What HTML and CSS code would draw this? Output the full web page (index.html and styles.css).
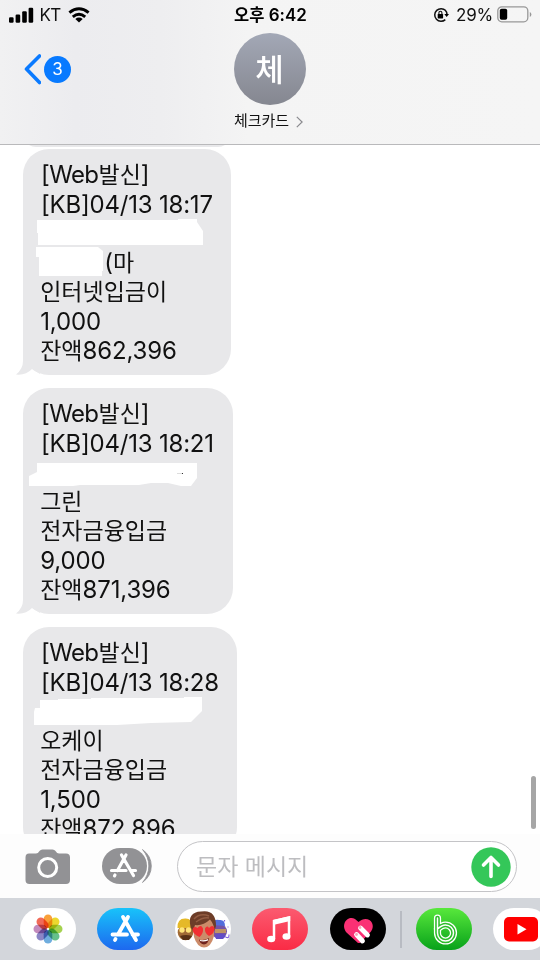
FILE: index.html
```html
<!DOCTYPE html>
<html lang="ko">
<head>
<meta charset="utf-8">
<title>체크카드</title>
<link rel="stylesheet" href="styles.css">
</head>
<body>
<div class="phone">
  <header class="header">
    <div class="status">
      <div class="status-left">
        <svg width="25" height="16" viewBox="0 0 25 16"><rect x="0" y="10.2" width="4.6" height="5.6" rx="1.2"/><rect x="6.6" y="7.6" width="4.6" height="8.2" rx="1.2"/><rect x="13.2" y="4.2" width="4.6" height="11.6" rx="1.2"/><rect x="19.6" y="0.8" width="4.6" height="15" rx="1.2"/></svg>
        <span class="carrier">KT</span>
        <svg class="wifi" width="22" height="16" viewBox="0 0 22 16"><path d="M1.4 5.6Q11-2 20.600 5.600M4.800 9.800Q11 4.800 17.200 9.800" fill="none" stroke="#000" stroke-width="3"/><path d="M7.3 12Q11 9.200 14.7 12L11 15.6Z"/></svg>
      </div>
      <div class="clock"><span class="ko">오후</span> 6:42</div>
      <div class="status-right">
        <svg width="16" height="16" viewBox="0 0 16 16"><path d="M12.600 3.600A6.300 6.300 0 1 0 12.300 12.600M12.300 3.300Q14 5 14 7.500" fill="none" stroke="#111" stroke-width="1.500"/><path d="M11.300 7.100h4.700l-2.300 3Z"/><rect x="4.700" y="7" width="5.400" height="4.400" rx=".6"/><path d="M5.900 7V5.800a1.5 1.5 0 0 1 3 0V7" fill="none" stroke="#111" stroke-width="1.1"/></svg>
        <span class="percent">29%</span>
        <svg width="35" height="17" viewBox="0 0 35 17"><rect x=".8" y=".8" width="30" height="15" rx="4" fill="none" stroke="#989898" stroke-width="1.3"/><rect x="2.8" y="2.8" width="7.4" height="11" rx="1.8"/><path d="M32.8 6v5q1.6-.8 1.6-2.5T32.800 6" fill="#989898"/></svg>
      </div>
    </div>
    <div class="nav">
      <div class="back">
        <svg width="18" height="32" viewBox="0 0 18 32"><path d="M16.500 3L3.500 16 16.500 29.500" fill="none" stroke="#0a7aff" stroke-width="3.600" stroke-linecap="round" stroke-linejoin="round"/></svg>
        <span class="count">3</span>
      </div>
      <div class="contact">
        <div class="avatar">체</div>
        <div class="name"><span>체크카드</span><svg width="7" height="12" viewBox="0 0 7 12"><path d="M.8.900L6.100 6 .8 11.100" fill="none" stroke="#8a8a8e" stroke-width="1.200"/></svg></div>
      </div>
    </div>
  </header>

  <main class="thread">
    <div class="bubble bubble-prev"></div>
    <div class="bubble b1">
      <p><span class="en w">[Web</span>발신<span class="en">]</span></p>
      <p><span class="en d">[KB]04/13 18:17</span></p>
      <p></p>
      <p class="payer"><span class="en">(</span>마</p>
      <p>인터넷입금이</p>
      <p><span class="en n">1,000</span></p>
      <p>잔액<span class="en n">862,396</span></p>
      <svg class="mask" width="240" height="226"><path fill="#fff" d="M14 71H155V70H174V73L180 82V96H15V84H14ZM13 98H75L80 102V122H79V127H16V108H13Z"/></svg>
      <svg class="tail" width="24" height="26" viewBox="0 0 24 26"><path d="M7 0V12Q7 20 0 25.500Q10 26.500 16 20L24 25V0Z"/></svg>
    </div>
    <div class="bubble b2">
      <p><span class="en w">[Web</span>발신<span class="en">]</span></p>
      <p><span class="en d">[KB]04/13 18:21</span></p>
      <p></p>
      <p>그린</p>
      <p>전자금융입금</p>
      <p><span class="en n">9,000</span></p>
      <p>잔액<span class="en n">871,396</span></p>
      <svg class="mask" width="240" height="226"><path fill="#fff" d="M14 75H174V90L168 98H158L145 95H128L116 97H57L50 98H6V88L14 84Z"/><path d="M154 85.500h5" stroke="#ddd"/><path d="M159 85.500h1" stroke="#333"/></svg>
      <svg class="tail" width="24" height="26" viewBox="0 0 24 26"><path d="M7 0V12Q7 20 0 25.500Q10 26.500 16 20L24 25V0Z"/></svg>
    </div>
    <div class="bubble b3">
      <p><span class="en w">[Web</span>발신<span class="en">]</span></p>
      <p><span class="en d">[KB]04/13 18:28</span></p>
      <p></p>
      <p>오케이</p>
      <p>전자금융입금</p>
      <p><span class="en n">1,500</span></p>
      <p>잔액<span class="en n">872,896</span></p>
      <svg class="mask" width="240" height="226"><path fill="#fff" d="M17 73H35V72H68V71H161V70H179V84L168 95L128 96L94 98H11V85L12 81H17Z"/></svg>
    </div>
    <div class="scrollbar"></div>
  </main>

  <div class="composer">
    <svg class="camera" width="46" height="36" viewBox="0 0 46 36"><path fill="#929295" d="M4 4.500H11Q13 4.500 14.500 2Q15.500.5 17.500.5H27.500Q29.500.5 30.500 2Q32 4.500 34 4.500H41Q45 4.500 45 8.500V31Q45 35 41 35H4.500Q.5 35 .5 31V8.500Q.5 4.500 4 4.500Z"/><circle cx="22.700" cy="18.500" r="9" fill="none" stroke="#fff" stroke-width="3"/></svg>
    <svg class="apps" width="52" height="38" viewBox="0 0 52 38"><rect x="0" y="1" width="45" height="36" rx="18" fill="#929295"/><path d="M40.500 2.500Q49.300 9 49.300 19T40.500 35.500Q46.800 28 46.800 19T40.500 2.500Z" fill="#929295" stroke="#929295" stroke-width=".8"/><g fill="none" stroke="#fff" stroke-width="3.200" stroke-linecap="round"><path d="M19.500 8L31.500 28.500M24 8L15.500 23.500M9.500 23.500H24M29 23.500H33.500M13 28L12.500 28.800"/></g></svg>
    <div class="field"><span>문자 메시지</span>
      <svg width="40" height="40" viewBox="0 0 40 40"><circle cx="20" cy="20" r="19.700" fill="#34c759"/><path d="M20 29.500V11M12.500 18L20 10.500 27.500 18" fill="none" stroke="#fff" stroke-width="3.600" stroke-linecap="round" stroke-linejoin="round"/></svg>
    </div>
  </div>

  <footer class="drawer">
    <div class="pill white"><svg viewBox="0 0 56 42"><g class="petals"><rect x="23.700" y="6.500" width="8.600" height="13.500" rx="4.300" fill="#f9a03a"/><rect x="23.700" y="6.500" width="8.600" height="13.500" rx="4.300" fill="#ecd82f" transform="rotate(45 28 21)"/><rect x="23.700" y="6.500" width="8.600" height="13.500" rx="4.300" fill="#a5d24f" transform="rotate(90 28 21)"/><rect x="23.700" y="6.500" width="8.600" height="13.500" rx="4.300" fill="#65c08b" transform="rotate(135 28 21)"/><rect x="23.700" y="6.500" width="8.600" height="13.500" rx="4.300" fill="#6fadde" transform="rotate(180 28 21)"/><rect x="23.700" y="6.500" width="8.600" height="13.500" rx="4.300" fill="#8c86c6" transform="rotate(225 28 21)"/><rect x="23.700" y="6.500" width="8.600" height="13.500" rx="4.300" fill="#c38bbd" transform="rotate(270 28 21)"/><rect x="23.700" y="6.500" width="8.600" height="13.500" rx="4.300" fill="#f16a58" transform="rotate(315 28 21)"/></g></svg></div>
    <div class="pill blue"><svg viewBox="0 0 56 42"><g fill="none" stroke="#fff" stroke-width="3.800" stroke-linecap="round"><path d="M26 9L39 32M31 9L21 26.500M15.500 26.500H30M35.500 26.500H41M18.500 31L18 32"/></g></svg></div>
    <div class="pill white"><svg viewBox="0 0 56 42">
      <circle cx="10.500" cy="24.500" r="7.800" fill="#a06a35"/><path d="M2.500 20Q2 10.500 10 10.500Q17 10 18 18L15 20Z" fill="#e5b928"/><path d="M5 28Q11 26 17 28L14 32H8Z" fill="#583115"/><circle cx="7" cy="22" r="2.700" fill="#ffe579"/><circle cx="13.500" cy="22" r="2.700" fill="#ffe579"/>
      <circle cx="44.500" cy="23.500" r="7.500" fill="#7653a5"/><path d="M38 17Q38 11 44 12Q50 11 50 18Z" fill="#536ddc"/><path d="M40 21H51V25H40Z" fill="#c09465"/><path d="M40 27Q47 24 51 28L48 31H41Z" fill="#624dc7"/><path d="M50.500 29Q54.500 31 54 26.500M49.500 12v1.500M52.500 19h1" stroke="#8362df" fill="none" stroke-width="1.200"/>
      <path d="M17.500 17Q18 8 28 8T39.500 17L39 28Q36 39.500 29 39.500Q22 39 19 29Z" fill="#cc8b69"/><path d="M15.500 19Q12 4 26 3.500Q41 1 41 18L39.500 23Q39 16 35 11.500Q28 18 20 17L18 23Z" fill="#6d3d28"/><path d="M19 11Q25 4.500 34 8M21 14Q28 9 34 10" stroke="#935d43" fill="none" stroke-width="1.500"/><path d="M24.500 29Q18 26 17.500 21.500Q18.500 17.500 22.500 20Q26 16 28 20.500Q28.500 26 24.500 29ZM34 28Q29.500 25 30 20.500Q32 17 34 20Q37.500 16 39.500 20Q40 25 34 28Z" fill="#f22f32"/><path d="M24 31.500Q29 33 34 30Q33 36.500 29 36.500Q25 36 24 31.500" fill="#70221d"/><path d="M25 32Q29 33 33 31V32.500Q29 34 25 33" fill="#fff"/></svg></div>
    <div class="pill red"><svg viewBox="0 0 56 42"><path d="M22 31V13L37 9.500V28" fill="none" stroke="#fff" stroke-width="2.500"/><path d="M21 12L38.200 8V13L21 17Z" fill="#fff"/><ellipse cx="19.200" cy="31" rx="4" ry="3.300" fill="#fff"/><ellipse cx="34.500" cy="28.500" rx="4" ry="3.300" fill="#fff"/></svg></div>
    <div class="pill black"><svg viewBox="0 0 56 42"><path d="M28 35L16.500 24.500C10 16 18 7 25 11L28.500 14C37 6 47 15 41 23.500L30 35Z" fill="#fa3074"/><g stroke="#fff" stroke-width="4.800" stroke-linecap="round"><path d="M30.500 20L37.500 27M26.500 26.500L32.500 33"/></g><g fill="#f6a7ba"><circle cx="30" cy="19.500" r="1.400"/><circle cx="26.500" cy="26.500" r="1.400"/></g></svg></div>
    <div class="divider"></div>
    <div class="pill green"><svg viewBox="0 0 56 42"><g fill="none"><path d="M21.500 10V25A8 8 0 1 0 29.500 17Q26 17 21.500 21" stroke="#fff" stroke-width="7.200" stroke-linecap="round"/><path d="M21.500 10V25A8 8 0 1 0 29.500 17Q26 17 21.500 21" stroke="#2dbd2a" stroke-width="4.600" stroke-linecap="round"/><path d="M21.500 10V25A8 8 0 1 0 29.500 17Q26 17 21.500 21" stroke="#fff" stroke-width="1.500" stroke-linecap="round"/></g></svg></div>
    <div class="pill white"><svg viewBox="0 0 56 42"><rect x="11" y="9" width="34" height="24.500" rx="5" fill="#f00"/><path d="M24.500 16L33.500 21.200 24.500 26.500Z" fill="#fff"/></svg></div>
  </footer>
</div>
</body>
</html>
```
FILE: styles.css
```css
* { box-sizing: border-box; }
body { margin: 0; background: #fff; color: #111; font-family: Inter, "Noto Sans CJK KR", sans-serif; }
svg { display: block; flex: none; }
p { margin: 0; }
.phone { width: 540px; height: 960px; overflow: hidden; display: flex; flex-direction: column; }

.header { height: 145px; flex: none; border-bottom: 1px solid #b9b9bb; background: linear-gradient(90deg, #f1f1f2 0, #ececef 14%, #eeeef0 30%, #f4f4f4 46%, #f5f5f5 100%); }
.status { height: 28px; display: grid; grid-template-columns: 1fr auto 1fr; align-items: center; padding: 0 8px 0 9px; }
.status-left, .status-right { display: flex; align-items: center; }
.status-right { justify-content: flex-end; }
.carrier { font-size: 17px; margin-left: 5.500px; letter-spacing: -.6px; }
.wifi { margin-left: 7.500px; }
.clock { font-size: 17px; font-weight: 600; line-height: 28px; color: #000; white-space: nowrap; }
.clock .ko { font-family: "Noto Sans CJK KR", sans-serif; font-weight: 700; font-size: 16.500px; }
.percent { font-size: 17px; margin: 0 4px 0 7px; letter-spacing: -.2px; }
.nav { display: grid; grid-template-columns: 1fr auto 1fr; }
.back { display: flex; align-items: center; height: 72px; margin-top: 5px; padding-left: 23px; }
.count { width: 27px; height: 27px; margin-left: 3px; border-radius: 50%; background: #087aff; color: #fff; font-size: 17px; line-height: 27px; text-align: center; }
.contact { display: flex; flex-direction: column; align-items: center; padding-top: 5px; }
.avatar { width: 72px; height: 72px; border-radius: 50%; background: linear-gradient(#a3a8b6, #858790); color: #fff; text-align: center; font: 500 31px/69px "Noto Sans CJK KR", sans-serif; text-indent: -1px; }
.name { display: flex; align-items: center; gap: 7px; height: 30px; margin-left: -3px; font: 400 15px/32px "Noto Sans CJK KR", sans-serif; }
.name svg { margin-top: 3px; }

.thread { height: 689px; flex: none; overflow: hidden; position: relative; display: flex; flex-direction: column; align-items: flex-start; padding-left: 23px; }
.bubble { position: relative; flex: none; height: 226px; margin-bottom: 13px; padding: 10px 0 0 17.200px; background: #e8e8ea; border-radius: 26px; font: 400 23px/29.25px "Noto Sans CJK KR", sans-serif; white-space: nowrap; }
.bubble p { height: 29.25px; line-height: 29.25px; }
.bubble-prev { height: 26px; width: 208px; margin: -24px 0 2.300px; padding: 0; }
.b1 { width: 208px; }
.b2 { width: 209.500px; }
.b3 { width: 214px; }
.en { font-family: Inter, sans-serif; font-size: 24px; line-height: 1; }
.w { letter-spacing: -.6px; margin-left: .8px; }
.d { letter-spacing: -.2px; margin-left: .8px; }
.n { letter-spacing: -.15px; }
.payer { padding-left: 64px; }
.mask { position: absolute; left: 0; top: 0; }
.tail { position: absolute; left: -7px; bottom: 0; fill: #e8e8ea; }
.scrollbar { position: absolute; right: 4px; top: 631px; width: 5px; height: 53px; border-radius: 3px; background: #a6a6a6; }

.composer { height: 64px; flex: none; display: flex; align-items: flex-start; padding: 7px 23px 0 25px; background: #fdfdfd; }
.camera { margin-top: 8px; }
.apps { margin: 6px 0 0 31px; }
.field { flex: 1; margin-left: 23px; height: 51px; border: 1.500px solid #c4c4c7; border-radius: 26px; display: flex; align-items: center; justify-content: space-between; padding: 0 5px 0 18px; background: #fff; color: #bdbdc0; font: 400 23px/48px "Noto Sans CJK KR", sans-serif; }
.field span { margin-top: -4px; }

.drawer { height: 62px; flex: none; display: flex; align-items: flex-start; gap: 21.600px; padding: 10px 0 0 19.500px; background: #d3d6db; }
.pill { width: 56px; height: 42px; flex: none; border-radius: 21px; overflow: hidden; }
.pill svg { width: 56px; height: 42px; }
.white { background: #fff; }
.blue { background: linear-gradient(#18c3fa, #1d68ef); }
.red { background: linear-gradient(#fb5b70, #fa2b45); }
.black { background: #000; }
.green { background: linear-gradient(#58e83c, #08a21a); }
.petals rect { mix-blend-mode: multiply; }
.divider { width: 2px; height: 37px; flex: none; margin: 3px -8px 0 -7.500px; background: #b8bbc2; }
```
